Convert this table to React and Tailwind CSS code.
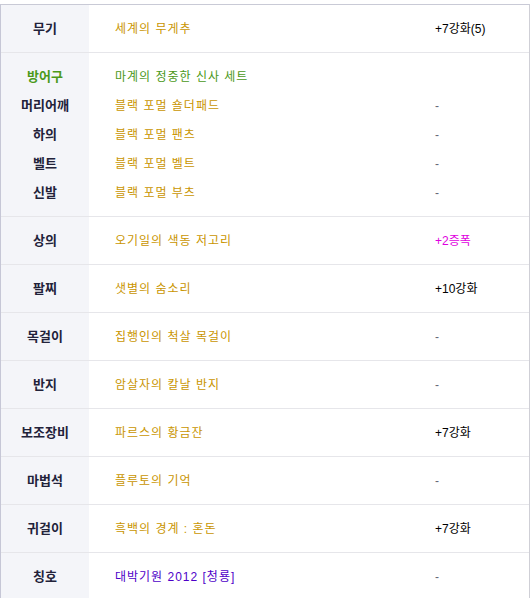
const GOLD = "text-[#c99500]";

const rows = [
  { label: "무기", item: "세계의 무게추", value: "+7강화(5)" },
  {
    group: [
      { label: "방어구", item: "마계의 정중한 신사 세트", labelClass: "text-[#4c9a1a]", itemClass: "text-[#4a9818]", value: "" },
      { label: "머리어깨", item: "블랙 포멀 숄더패드", value: "-" },
      { label: "하의", item: "블랙 포멀 팬츠", value: "-" },
      { label: "벨트", item: "블랙 포멀 벨트", value: "-" },
      { label: "신발", item: "블랙 포멀 부츠", value: "-" },
    ],
  },
  { label: "상의", item: "오기일의 색동 저고리", value: "+2증폭", valueClass: "text-[#e000e0]" },
  { label: "팔찌", item: "샛별의 숨소리", value: "+10강화" },
  { label: "목걸이", item: "집행인의 척살 목걸이", value: "-" },
  { label: "반지", item: "암살자의 칼날 반지", value: "-" },
  { label: "보조장비", item: "파르스의 황금잔", value: "+7강화" },
  { label: "마법석", item: "플루토의 기억", value: "-" },
  { label: "귀걸이", item: "흑백의 경계 : 혼돈", value: "+7강화" },
  { label: "칭호", item: "대박기원 2012 [청룡]", value: "-", itemClass: "text-[#4e00c8]" },
];

function Value({ value, valueClass }) {
  if (value === "-") return <span className="text-[#666676]">-</span>;
  return <span className={valueClass || "text-black"}>{value}</span>;
}

function Cells({ r }) {
  return (
    <>
      <div className={`w-[88px] text-center text-[13px] font-bold ${r.labelClass || "text-[#22223a]"}`}>
        {r.label}
      </div>
      <div className={`flex-1 pl-[26px] tracking-[1px] ${r.itemClass || GOLD}`}>{r.item}</div>
      <div className="w-[94px]">
        <Value value={r.value} valueClass={r.valueClass} />
      </div>
    </>
  );
}

export default function App() {
  return (
    <div
      className="pt-[4px] text-[12px]"
      style={{ fontFamily: '"Liberation Sans", "Noto Sans CJK KR", sans-serif' }}
    >
      <div className="w-[530px] border-t border-l border-r border-t-[#c9cad6] border-l-[#c6c7d6] border-r-[#cfcfd6] bg-white">
        {rows.map((r, i) => (
          <div key={i} className="relative border-b border-[#e6e6ea]">
            <div className="absolute inset-y-0 left-0 w-[88px] bg-[#f4f5f9]" />
            <div className="relative">
              {r.group ? (
                <div className="pt-[9px] pb-[9px]">
                  {r.group.map((g, j) => (
                    <div key={j} className="flex h-[29px] items-center">
                      <Cells r={g} />
                    </div>
                  ))}
                </div>
              ) : (
                <div className="flex h-[47px] items-center">
                  <Cells r={r} />
                </div>
              )}
            </div>
          </div>
        ))}
      </div>
    </div>
  );
}
